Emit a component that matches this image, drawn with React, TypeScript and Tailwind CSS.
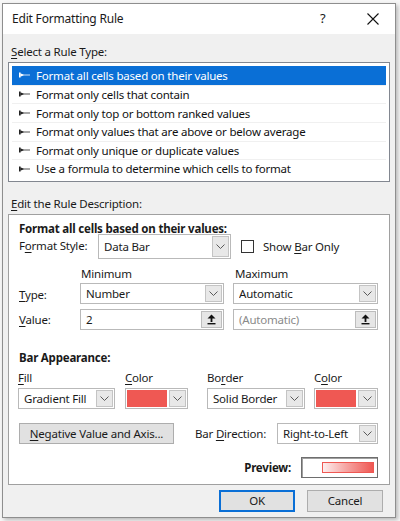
import React from 'react'

const ruleTypes = [
  'Format all cells based on their values',
  'Format only cells that contain',
  'Format only top or bottom ranked values',
  'Format only values that are above or below average',
  'Format only unique or duplicate values',
  'Use a formula to determine which cells to format',
]

const RED = '#ef5853'

const Chevron = () => (
  <svg width="9" height="5" viewBox="0 0 9 5" fill="none" stroke="#5a5a5a" strokeWidth="1">
    <path d="M0.5 0.5L4.5 4.5L8.5 0.5" />
  </svg>
)

const RuleArrow = ({ color }: { color: string }) => (
  <svg width="11" height="6" viewBox="0 0 11 6" fill={color}>
    <rect x="0" y="0.5" width="1.6" height="5" />
    <path d="M1 3.4L11 3.4L11 2.6L1 2.6Z" />
    <path d="M1.5 1.2L5 3L1.5 4.8Z" />
  </svg>
)

const UpIcon = () => (
  <svg width="9" height="11" viewBox="0 0 9 11" fill="#111">
    <path d="M4.5 0.5L8.5 4.5H0.5Z" />
    <rect x="3.6" y="4" width="1.8" height="4" />
    <rect x="0.5" y="9" width="8" height="1.4" />
  </svg>
)

const U = ({ children }: { children: React.ReactNode }) => <span className="underline underline-offset-2">{children}</span>

function Combo({ width, text, height = 'h-[21px]' }: { width: string; text: string; height?: string }) {
  return (
    <div className={`${width} ${height} flex items-center bg-white border border-[#b9b9b9] pl-[5px] pr-[1px]`}>
      <span className="flex-1 truncate">{text}</span>
      <div className="w-[17px] h-[calc(100%-2px)] flex items-center justify-center bg-[#e8e8e8] border border-[#c4c4c4]">
        <Chevron />
      </div>
    </div>
  )
}

function ColorCombo({ width }: { width: string }) {
  return (
    <div className={`${width} h-[21px] flex items-center bg-white border border-[#b9b9b9] p-[1px]`}>
      <div className="w-[40px] h-full" style={{ background: RED }} />
      <div className="flex-1 h-full ml-[2px] flex items-center justify-center bg-[#e8e8e8] border border-[#c4c4c4]">
        <Chevron />
      </div>
    </div>
  )
}

function SpinInput({ width, text, muted }: { width: string; text: string; muted?: boolean }) {
  return (
    <div className={`${width} h-[21px] flex items-center bg-white border border-[#b9b9b9] pl-[5px] pr-[1px]`}>
      <span className={`flex-1 ${muted ? 'text-[#8a8a8a]' : ''}`}>{text}</span>
      <div className="w-[21px] h-[17px] flex items-center justify-center bg-[#e6e6e6] border border-[#bdbdbd]">
        <UpIcon />
      </div>
    </div>
  )
}

export default function App() {
  return (
    <div
      className="w-[400px] h-[521px] bg-[#f7f7f7] pt-[3px] pl-[2px] text-[11.5px] tracking-[-0.2px] text-[#1a1a1a] overflow-hidden"
      style={{ fontFamily: '"Noto Sans", "Open Sans", sans-serif' }}
    >
      <div className="w-[394px] h-[515px] border border-[#8e8e8e] bg-[#f0f0f0] shadow-[2px_2px_4px_rgba(0,0,0,0.25)] flex flex-col">
        {/* title bar */}
        <div className="h-[30px] bg-white flex items-center pl-[9px]">
          <span className="flex-1 text-[12px]">Edit Formatting Rule</span>
          <span className="w-[10px] text-[13px] mr-[37px]">?</span>
          <svg width="12" height="12" viewBox="0 0 12 12" stroke="#111" strokeWidth="1.1" className="mr-[16px]">
            <path d="M0.5 0.5L11.5 11.5M11.5 0.5L0.5 11.5" />
          </svg>
        </div>

        <div className="flex-1 pl-[5px] flex flex-col">
          <div className="mt-[10px] h-[16px] leading-[16px] pl-[3px]">
            <U>S</U>elect a Rule Type:
          </div>

          {/* rule type list */}
          <div className="mt-[2px] w-[382px] h-[120px] bg-white border border-[#828790] p-[3px] pr-[3px]">
            {ruleTypes.map((rule, i) => (
              <div
                key={rule}
                className={`h-[18.67px] flex items-center pl-[7px] gap-[6px] ${
                  i === 0 ? 'bg-[#0a6fd6] text-white' : 'border-t border-[#f0f0f0] text-[#111]'
                }`}
              >
                <RuleArrow color={i === 0 ? '#fff' : '#222'} />
                <span>{rule}</span>
              </div>
            ))}
          </div>

          <div className="mt-[14px] h-[16px] leading-[16px] pl-[3px]">
            <U>E</U>dit the Rule Description:
          </div>

          {/* description box */}
          <div className="mt-[2px] w-[382px] h-[271px] bg-white border border-[#a0a0a0] pl-[10px] flex flex-col">
            <div className="mt-[7px] h-[13px] leading-[13px] font-bold">Format all cells based on their values:</div>

            <div className="mt-[-1px] h-[25px] flex items-center">
              <span className="w-[79px] -mt-[2px]">
                F<U>o</U>rmat Style:
              </span>
              <Combo width="w-[133px]" height="h-[25px]" text="Data Bar" />
              <div className="ml-[10px] w-[13px] h-[13px] border border-[#333] bg-white" />
              <span className="ml-[9px]">
                Show <U>B</U>ar Only
              </span>
            </div>

            <div className="mt-[8px] h-[14px] leading-[14px] flex">
              <span className="ml-[62px] w-[154px]">Minimum</span>
              <span>Maximum</span>
            </div>

            <div className="mt-[2px] h-[21px] flex items-center">
              <span className="w-[61px] mt-[3px]">
                <U>T</U>ype:
              </span>
              <Combo width="w-[144px]" text="Number" />
              <div className="w-[9px]" />
              <Combo width="w-[145px]" text="Automatic" />
            </div>

            <div className="mt-[5px] h-[21px] flex items-center">
              <span className="w-[61px]">
                <U>V</U>alue:
              </span>
              <SpinInput width="w-[144px]" text="2" />
              <div className="w-[9px]" />
              <SpinInput width="w-[145px]" text="(Automatic)" muted />
            </div>

            <div className="mt-[21px] h-[14px] leading-[14px] font-bold">Bar Appearance:</div>

            <div className="mt-[6px] h-[14px] leading-[14px] flex">
              <span className="w-[107px] -ml-[1px]">
                <U>F</U>ill
              </span>
              <span className="w-[82px]">
                <U>C</U>olor
              </span>
              <span className="w-[107px]">
                Bo<U>r</U>der
              </span>
              <span>
                C<U>o</U>lor
              </span>
            </div>

            <div className="mt-[3px] h-[21px] flex items-center -ml-[1px]">
              <Combo width="w-[97px]" text="Gradient Fill" />
              <div className="w-[10px]" />
              <ColorCombo width="w-[63px]" />
              <div className="w-[19px]" />
              <Combo width="w-[98px]" text="Solid Border" />
              <div className="w-[9px]" />
              <ColorCombo width="w-[64px]" />
            </div>

            <div className="mt-[14px] h-[21px] flex items-center">
              <div className="w-[155px] h-[21px] flex items-center justify-center bg-[#e1e1e1] border border-[#adadad]">
                <span>
                  <U>N</U>egative Value and Axis...
                </span>
              </div>
              <span className="ml-[21px] w-[82px]">
                Bar <U>D</U>irection:
              </span>
              <Combo width="w-[101px]" text="Right-to-Left" />
            </div>

            <div className="mt-[13px] h-[21px] flex items-center justify-end pr-[11px]">
              <span className="font-bold mr-[10px]">Preview:</span>
              <div className="w-[77px] h-[21px] bg-white border border-[#6e6e6e] shadow-[inset_1px_1px_0_#a0a0a0] flex items-center justify-end pr-[3px]">
                <div
                  className="w-[52px] h-[11px]"
                  style={{ background: `linear-gradient(to right, #fdeeee, #f6a7a5 45%, ${RED})`, border: `1px solid ${RED}` }}
                />
              </div>
            </div>
          </div>

          {/* buttons */}
          <div className="mt-[5px] w-[382px] flex justify-end gap-[12px] pr-[7px]">
            <div className="w-[76px] h-[22px] flex items-center justify-center bg-[#e1e1e1] border-2 border-[#0a6fd6]">OK</div>
            <div className="w-[76px] h-[22px] flex items-center justify-center bg-[#e1e1e1] border border-[#adadad]">Cancel</div>
          </div>
        </div>
      </div>
    </div>
  )
}
